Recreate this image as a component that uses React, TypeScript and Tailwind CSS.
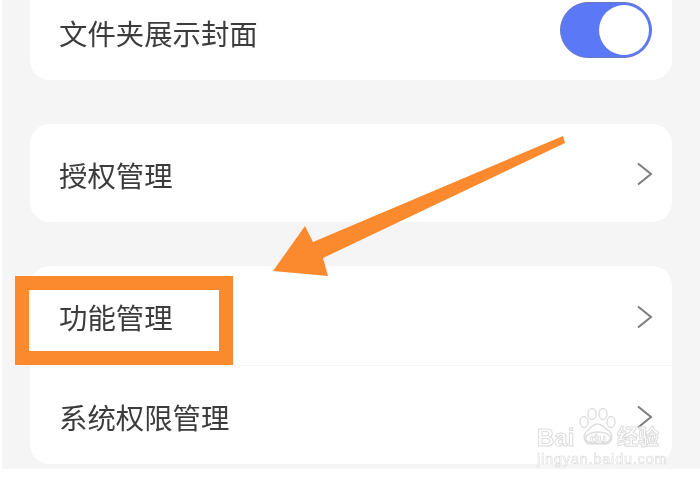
const cjk = 'font-["Noto_Sans_CJK_SC","Noto_Sans",sans-serif]';

function Chevron({ className }: { className?: string }) {
  return (
    <svg className={className} width="17" height="24" viewBox="0 0 17 24" fill="none" stroke="#7d7d7d" strokeWidth="2">
      <path d="M2 1.5 15 12 2 22.5" />
    </svg>
  );
}

function Row({ label, className, chevron }: { label: string; className: string; chevron?: string }) {
  return (
    <div className={`flex items-center justify-between pl-[29px] pr-[19px] ${className}`}>
      <span className="text-[28.4px] leading-none text-[#3c3c3c]">{label}</span>
      <Chevron className={chevron} />
    </div>
  );
}

function Arrow() {
  return (
    <svg className="absolute left-0 top-0" width="700" height="483" viewBox="0 0 700 483">
      <polygon
        points="563,136 565,143 323,258 328,276 273,271 305,226 313,242"
        fill="#fb8a2e"
      />
    </svg>
  );
}

function Watermark() {
  return (
    <div className="absolute left-[536px] top-[405px] w-[130px] h-[65px]">
      <svg className="absolute left-[41px] top-[2px]" width="42" height="42" viewBox="0 0 42 42" fill="#ffffff" stroke="#dedede" strokeWidth="1.4">
        <ellipse cx="7" cy="15" rx="4" ry="5.5" />
        <ellipse cx="15" cy="7" rx="4" ry="5.5" />
        <ellipse cx="26" cy="7" rx="4" ry="5.5" />
        <ellipse cx="34" cy="15" rx="4" ry="5.5" />
        <path d="M20 17c-4 0-6 4-10 7-5 4-3 13 4 13 3 0 4-1 7-1s4 1 7 1c7 0 9-8 4-13-4-3-7-7-12-7z" />
        <ellipse cx="21" cy="31" rx="12.5" ry="6" />
      </svg>
      <span className="absolute left-[1px] top-[21px] text-[24px] leading-none font-bold [-webkit-text-stroke:1px_#dcdcdc] [-webkit-text-fill-color:#ffffff]">Bai</span>
      <span className="absolute left-[54px] top-[27px] text-[13px] leading-none font-bold [-webkit-text-stroke:0.6px_#cfcfcf] [-webkit-text-fill-color:#ffffff]">du</span>
      <span className={`absolute left-[81px] top-[20px] text-[21px] leading-none font-bold [-webkit-text-stroke:1px_#dcdcdc] [-webkit-text-fill-color:#ffffff] ${cjk}`}>经验</span>
      <span className="absolute left-[1px] top-[47px] text-[14.5px] leading-none tracking-[0.8px] [-webkit-text-stroke:0.6px_#dcdcdc] [-webkit-text-fill-color:#ffffff]">
        jingyan.baidu.com
      </span>
    </div>
  );
}

export default function App() {
  return (
    <div className='relative w-[700px] h-[483px] bg-white overflow-hidden blur-[0.7px] font-["Liberation_Sans",sans-serif]'>
      <div className={`ml-[2px] h-[469px] bg-[#f5f5f5] pl-[28px] pr-[28px] flex flex-col ${cjk}`}>
        <div className="h-[80px] bg-white rounded-b-[20px] flex items-center justify-between pl-[29px] pr-[20px]">
          <span className="text-[28.4px] leading-none text-[#3c3c3c] -mt-[14px]">文件夹展示封面</span>
          <div className="w-[92px] h-[56px] -mt-[21px] rounded-full bg-[#5b78f6] border border-[#6a79c4] flex items-center justify-end pr-[2px]">
            <div className="w-[50px] h-[50px] rounded-full bg-white" />
          </div>
        </div>
        <div className="mt-[44px] h-[98px] bg-white rounded-[20px] flex flex-col">
          <Row label="授权管理" className="h-[98px] pt-[4px]" chevron="-mt-[3px]" />
        </div>
        <div className="mt-[44px] h-[198px] bg-white rounded-[20px] flex flex-col">
          <Row label="功能管理" className="h-[100px] pt-[4px] border-b border-[#f6f6f6]" chevron="-mt-[2px]" />
          <Row label="系统权限管理" className="h-[98px] pt-[5px]" chevron="-mt-[1px]" />
        </div>
      </div>
      <Arrow />
      <div className="absolute left-[15px] top-[276px] w-[218px] h-[89px] border-[14px] border-[#fb8a2e]" />
      <Watermark />
    </div>
  );
}
